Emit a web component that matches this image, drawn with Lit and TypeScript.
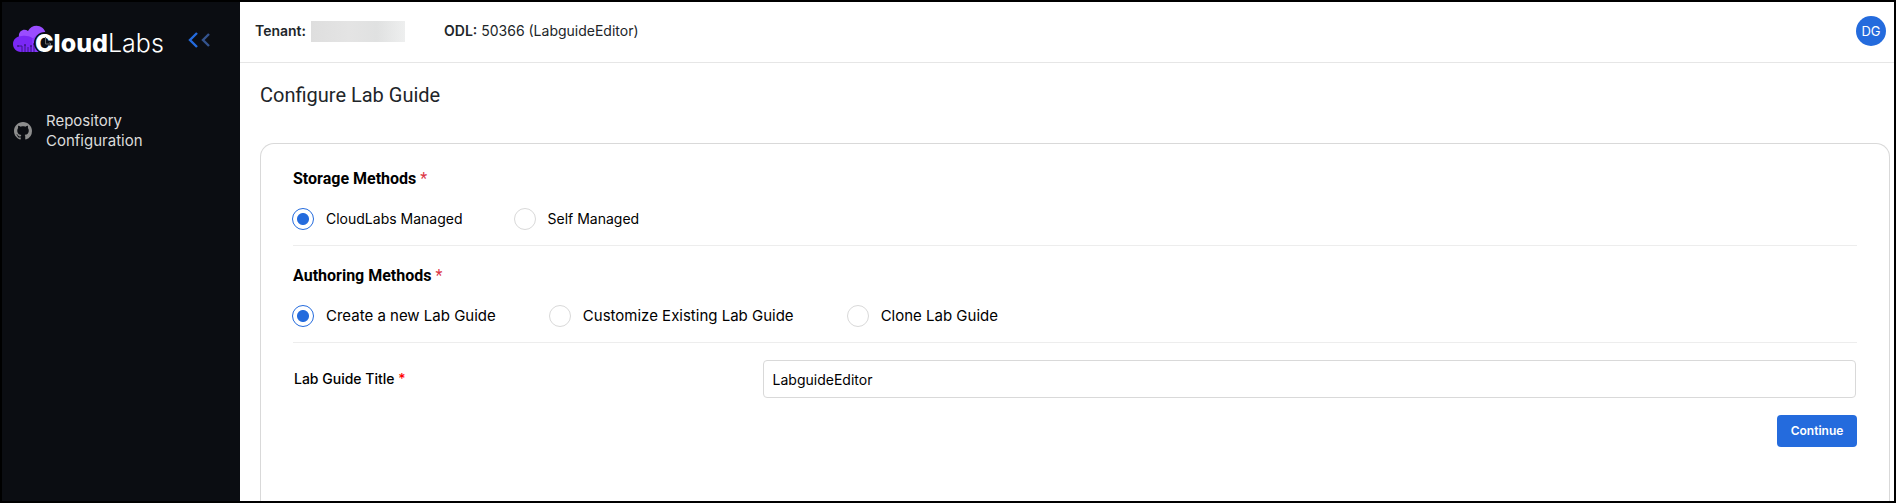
import { LitElement, html, css, svg } from "lit";
import { customElement, property, state } from "lit/decorators.js";

interface Choice {
  value: string;
  label: string;
}

const STORAGE: Choice[] = [
  { value: "cloudlabs", label: "CloudLabs Managed" },
  { value: "self", label: "Self Managed" },
];

const AUTHORING: Choice[] = [
  { value: "create", label: "Create a new Lab Guide" },
  { value: "customize", label: "Customize Existing Lab Guide" },
  { value: "clone", label: "Clone Lab Guide" },
];

const cloudShape = svg`
  <path fill="#9a4dff" d="M6 12C5 6 11 3 15 6C19-2 31-1 33 9L36 27H12Z"/>
  <path fill="#7a28f5" d="M8 27C3 27 0 23 0 19C0 14 4 11 9 11C16 10 22 13 24 19V27Z"/>
  <path fill="#8538fb" d="M19 27V14L25 9L30 27Z"/>
  <g stroke="#3c1686" stroke-width="1" fill="none">
    <path d="M9 27V21H5M12 27V20M15 27V22M18 27V21M21 27V19"/>
  </g>
  <g fill="#3c1686">
    <circle cx="5" cy="21" r="1"/><circle cx="12" cy="20" r="1"/>
    <circle cx="18" cy="21" r="1"/><circle cx="21" cy="19" r="1"/>
  </g>
  <circle cx="32" cy="18" r="11" fill="#0b0d12"/>`;

@customElement("radio-group")
export class RadioGroup extends LitElement {
  static styles = css`
    :host { display: block; }
    .group {
      margin: 0;
      padding: 0 0 15px;
      border: 0;
      border-bottom: 1px solid #ededed;
      min-width: 0;
    }
    .legend {
      padding: 0;
      font: 700 16px/24px Roboto, sans-serif;
      color: #000;
    }
    .star { color: #dc3545; font-weight: 400; }
    .options {
      display: flex;
      flex-wrap: wrap;
      gap: 12px 54px;
      margin-top: 17px;
    }
    .option {
      display: flex;
      align-items: center;
      gap: 12px;
      margin-left: -1px;
      color: #000;
      font: 400 15px/22px Inter, sans-serif;
      cursor: pointer;
    }
    :host([compact]) .options { column-gap: 52px; }
    :host([compact]) .option { font-size: 14px; }
    .radio {
      appearance: none;
      box-sizing: border-box;
      width: 22px;
      height: 22px;
      margin: 0;
      border: 1px solid #d9d9d9;
      border-radius: 50%;
      background: #fff;
      cursor: pointer;
    }
    .radio:checked {
      border-color: #246bdd;
      background: radial-gradient(circle, #246bdd 0 5.5px, transparent 6.5px);
    }
  `;

  @property() heading = "";
  @property() name = "";
  @property({ attribute: false }) choices: Choice[] = [];
  @state() private selected = 0;

  render() {
    return html`
      <fieldset class="group">
        <legend class="legend">${this.heading} <span class="star">*</span></legend>
        <div class="options">
          ${this.choices.map((c, i) => html`
            <label class="option">
              <input class="radio" type="radio" name=${this.name} value=${c.value}
                .checked=${i === this.selected}
                @change=${() => { this.selected = i; }}>
              <span>${c.label}</span>
            </label>`)}
        </div>
      </fieldset>`;
  }
}

@customElement("side-bar")
export class SideBar extends LitElement {
  static styles = css`
    :host {
      display: block;
      background: #0b0d12;
      color: #dcdcdc;
      font: 400 15px/20px Inter, sans-serif;
    }
    .brand {
      display: flex;
      align-items: center;
      justify-content: space-between;
      padding: 23px 30px 0 11px;
    }
    .logo {
      display: grid;
      grid-template-columns: 22px auto;
      align-items: end;
      color: #fff;
      text-decoration: none;
      font: 800 25px/28px Inter, sans-serif;
    }
    .cloud { width: 42px; height: 28px; grid-area: 1 / 1; z-index: 0; }
    .word { grid-area: 1 / 2; z-index: 1; position: relative; top: 4px; }
    .light { font-weight: 300; }
    .hand {
      position: absolute;
      left: 9px;
      top: 8px;
      width: 8px;
      height: 9px;
    }
    .collapse {
      display: flex;
      padding: 2px 0 0;
      border: 0;
      background: none;
      cursor: pointer;
    }
    .nav { padding: 58px 12px 0; }
    .item {
      display: flex;
      align-items: center;
      gap: 14px;
      color: inherit;
      text-decoration: none;
    }
    .mark { flex: none; width: 18px; height: 18px; }
    .label { max-width: 120px; }
  `;

  render() {
    return html`
      <div class="brand">
        <a class="logo" href="#">
          <svg class="cloud" viewBox="0 0 42 28" aria-hidden="true">${cloudShape}</svg>
          <span class="word">Cloud<span class="light">Labs</span><svg
            class="hand" viewBox="0 0 8 9" fill="none" stroke="#666" stroke-width="1"
            aria-hidden="true"><path d="M1.500 0V7H7M5.500 5.500L7 7L5.500 8.500"/></svg></span>
        </a>
        <button class="collapse" type="button" aria-label="Collapse menu">
          <svg width="22" height="16" viewBox="0 0 22 16" fill="none" stroke-width="2.400">
            <path stroke="#246bdd" d="M9 1L2 8L9 15"/>
            <path stroke="#34538d" d="M21 2L15 8L21 14"/>
          </svg>
        </button>
      </div>
      <nav class="nav">
        <a class="item" href="#">
          <svg class="mark" viewBox="0 0 16 16" fill="#8d8d8d" aria-hidden="true">
            <path d="M8 0C3.580 0 0 3.580 0 8c0 3.540 2.290 6.530 5.470 7.590.4.070.55-.17.55-.38 0-.19-.01-.82-.01-1.490-2.010.37-2.530-.49-2.690-.94-.09-.23-.48-.94-.82-1.130-.28-.15-.68-.52-.01-.53.63-.01 1.080.58 1.230.82.72 1.210 1.870.87 2.330.66.07-.52.28-.87.51-1.070-1.780-.2-3.640-.89-3.640-3.950 0-.87.31-1.590.82-2.150-.08-.2-.36-1.020.08-2.120 0 0 .67-.21 2.200.82.64-.18 1.320-.27 2-.27s1.360.09 2 .27c1.530-1.040 2.200-.82 2.200-.82.44 1.100.16 1.920.08 2.120.51.56.82 1.270.82 2.150 0 3.070-1.870 3.750-3.650 3.950.29.25.54.73.54 1.480 0 1.070-.01 1.930-.01 2.200 0 .21.15.46.55.38A8.010 8.010 0 0 0 16 8c0-4.420-3.580-8-8-8z"/>
          </svg>
          <span class="label">Repository Configuration</span>
        </a>
      </nav>`;
  }
}

@customElement("app-root")
export class AppRoot extends LitElement {
  static styles = css`
    :host {
      display: grid;
      grid-template-columns: 238px minmax(0, 1fr);
      box-sizing: border-box;
      height: 100vh;
      border: 2px solid #000;
      background: #fff;
      overflow: hidden;
      font-family: Inter, sans-serif;
    }
    .page { display: flex; flex-direction: column; min-width: 0; min-height: 0; }
    .top {
      display: flex;
      align-items: center;
      padding: 14px 8px 16px 15px;
      border-bottom: 1px solid #e6e6e6;
      color: #212529;
      font-size: 14px;
      line-height: 20px;
    }
    .tenant { display: flex; align-items: center; gap: 5px; margin-right: 39px; }
    .key { font-weight: 600; }
    .masked {
      width: 94px;
      height: 21px;
      background: linear-gradient(90deg, #dedede, #e4e4e4 40%, #e0e1e1 70%, #eeefef);
    }
    .avatar {
      width: 30px;
      height: 30px;
      margin-left: auto;
      padding: 0;
      border: 0;
      border-radius: 50%;
      background: #246bdd;
      color: #fff;
      font: 400 13px/30px Inter, sans-serif;
      cursor: pointer;
    }
    .main {
      display: flex;
      flex-direction: column;
      flex: 1;
      min-height: 0;
      padding: 20px 4px 0 20px;
    }
    .title {
      margin: 0 0 36px;
      color: #212529;
      font: 400 20px/24px Roboto, sans-serif;
    }
    .card {
      flex: 1;
      padding: 23px 32px 0;
      border: 1px solid #d9d9d9;
      border-bottom: 0;
      border-radius: 14px 14px 0 0;
    }
    .second { margin-top: 18px; }
    .row {
      display: grid;
      grid-template-columns: 30% minmax(0, 1fr);
      align-items: center;
      padding: 17px 1px 0;
    }
    .name { color: #000; font: 500 14px/20px Inter, sans-serif; }
    .star { color: #f00; }
    .text {
      box-sizing: border-box;
      width: 100%;
      height: 38px;
      padding: 0 9px;
      border: 1px solid #d9d9d9;
      border-radius: 4px;
      background: #fff;
      color: #000;
      font: 400 14px/20px Inter, sans-serif;
    }
    .actions { display: flex; justify-content: flex-end; margin-top: 17px; }
    .go {
      width: 80px;
      height: 32px;
      padding: 0;
      border: 0;
      border-radius: 4px;
      background: #246bdd;
      color: #fff;
      font: 600 12px/20px Inter, sans-serif;
      cursor: pointer;
    }
  `;

  render() {
    return html`
      <side-bar></side-bar>
      <div class="page">
        <header class="top">
          <div class="tenant"><span class="key">Tenant:</span><span class="masked"></span></div>
          <div><span class="key">ODL:</span> 50366 (LabguideEditor)</div>
          <button class="avatar" type="button">DG</button>
        </header>
        <main class="main">
          <h1 class="title">Configure Lab Guide</h1>
          <form class="card" @submit=${(e: Event) => e.preventDefault()}>
            <radio-group compact heading="Storage Methods" name="storage" .choices=${STORAGE}></radio-group>
            <radio-group class="second" heading="Authoring Methods" name="authoring" .choices=${AUTHORING}></radio-group>
            <div class="row">
              <label class="name" for="guide-title">Lab Guide Title <span class="star">*</span></label>
              <input class="text" id="guide-title" type="text" value="LabguideEditor" required>
            </div>
            <div class="actions"><button class="go" type="submit">Continue</button></div>
          </form>
        </main>
      </div>`;
  }
}
